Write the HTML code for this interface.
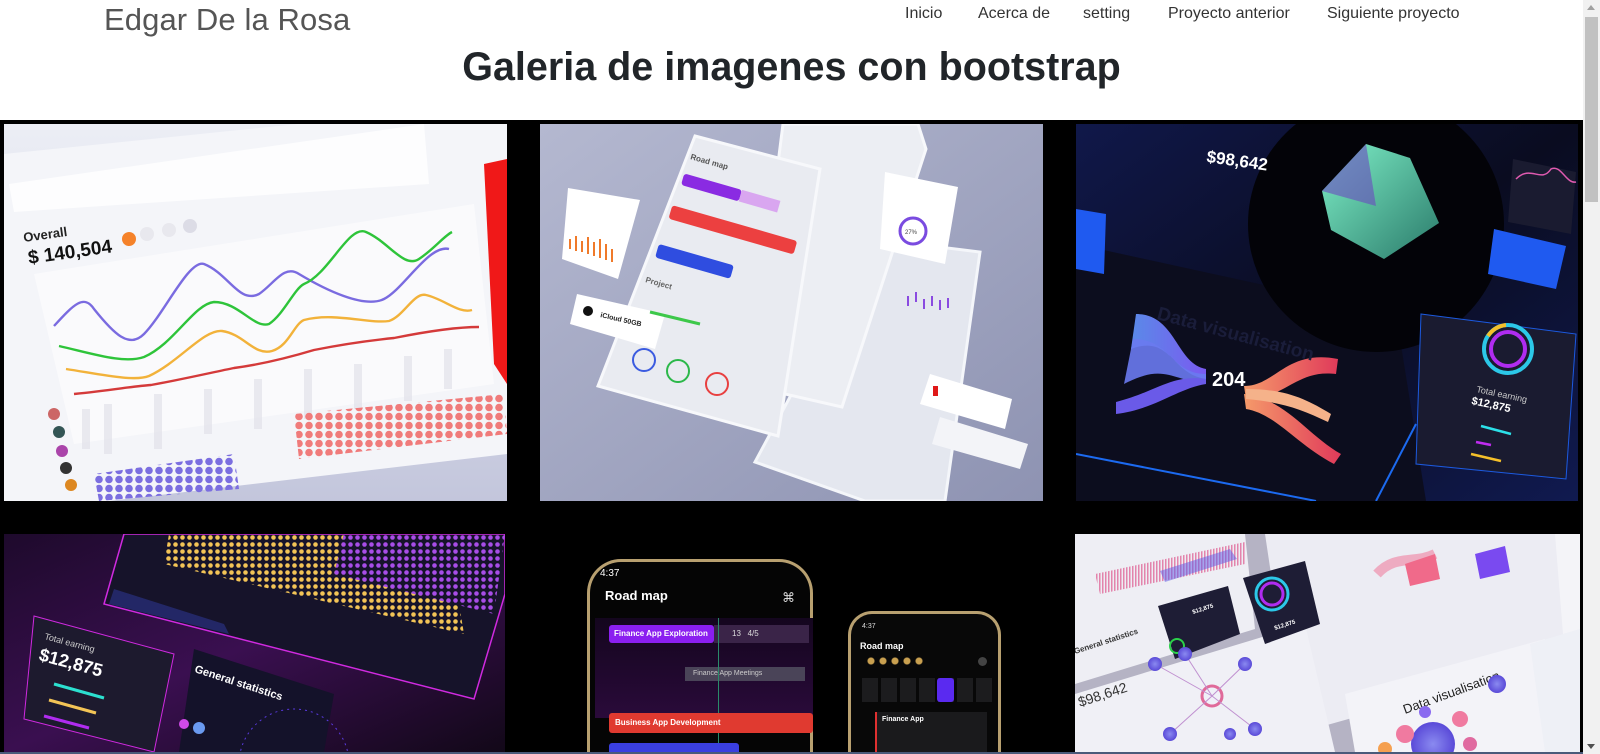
<!DOCTYPE html>
<html><head><meta charset="utf-8"><style>
*{margin:0;padding:0;box-sizing:border-box}
html,body{width:1600px;height:754px;overflow:hidden;background:#fff;font-family:"Liberation Sans",sans-serif;color:#212529}
#wrap{position:relative;width:1600px;height:754px;overflow:hidden}
.abs{position:absolute}
#title{left:104px;top:2px;font-size:31px;font-weight:300;color:#555;letter-spacing:0.1px}
.nav{top:5px;font-size:16px;color:#333}
#h{left:0;width:1583px;top:45px;text-align:center;font-size:39.5px;font-weight:bold;color:#212529}
#black{left:0;top:120px;width:1583px;height:634px;background:#000}
#sb{left:1583px;top:0;width:17px;height:754px;background:#f1f1f1}
#thumb{left:1585px;top:17px;width:13px;height:185px;background:#c1c1c1}
svg{position:absolute;overflow:hidden}
</style></head><body><div id="wrap">
<div class="abs" id="title">Edgar De la Rosa</div>
<div class="abs nav" style="left:905px">Inicio</div>
<div class="abs nav" style="left:978px">Acerca de</div>
<div class="abs nav" style="left:1083px">setting</div>
<div class="abs nav" style="left:1168px">Proyecto anterior</div>
<div class="abs nav" style="left:1327px">Siguiente proyecto</div>
<div class="abs" id="h">Galeria de imagenes con bootstrap</div>
<div class="abs" id="black"></div>

<!-- Panel 1 -->
<svg style="left:4px;top:124px" width="503" height="377" viewBox="0 0 503 377">
<defs><linearGradient id="g1" x1="0" y1="0" x2="0" y2="1"><stop offset="0" stop-color="#eceef5"/><stop offset="1" stop-color="#c3c6dc"/></linearGradient>
<pattern id="hexp" width="10" height="9" patternUnits="userSpaceOnUse"><circle cx="5" cy="4.5" r="3.8" fill="#7b6ee0"/></pattern>
<pattern id="hexr" width="10" height="9" patternUnits="userSpaceOnUse"><circle cx="5" cy="4.5" r="3.8" fill="#f07b7b"/></pattern></defs>
<rect width="503" height="377" fill="url(#g1)"/>
<polygon points="0,30 490,-20 503,-20 503,330 80,380 0,377" fill="#f4f5f9"/>
<polygon points="5,60 420,0 425,60 10,88" fill="#fff" opacity=".8"/>
<polygon points="30,150 470,80 490,260 70,320" fill="#fafafc"/>
<polygon points="480,40 503,35 503,260 490,240" fill="#f01818"/>
<text x="20" y="118" font-size="13" font-weight="bold" fill="#222" transform="rotate(-8 20 118)">Overall</text>
<text x="25" y="140" font-size="19" font-weight="bold" fill="#111" transform="rotate(-8 25 140)">$ 140,504</text>
<circle cx="125" cy="115" r="7" fill="#f5822a"/><circle cx="143" cy="110" r="7" fill="#e8e8ee"/><circle cx="165" cy="106" r="7" fill="#e8e8ee"/><circle cx="186" cy="102" r="7" fill="#dcdce6"/>
<path d="M50,202 C70,180 80,170 90,185 C110,210 125,225 140,210 C160,190 185,135 200,140 C225,150 235,180 255,170 C270,160 280,140 295,150 C320,165 360,185 380,175 C400,165 425,120 445,125" stroke="#7a6be0" stroke-width="2.4" fill="none"/>
<path d="M55,222 C90,230 120,240 140,233 C170,220 190,180 210,178 C235,178 250,205 265,200 C280,190 290,165 300,160 C325,150 345,100 362,108 C385,118 400,145 415,135 C430,125 440,112 448,108" stroke="#2ec43a" stroke-width="2.4" fill="none"/>
<path d="M62,245 C95,250 130,258 145,252 C175,238 200,205 218,207 C240,210 250,232 268,227 C285,222 290,200 300,196 C330,188 365,200 385,197 C400,192 410,168 422,171 C440,175 455,190 468,186" stroke="#f2b23a" stroke-width="2.4" fill="none"/>
<path d="M70,270 C110,266 130,262 147,261 C180,255 210,248 230,244 C260,240 290,232 310,226 C340,220 370,216 390,214 C420,208 450,203 475,203" stroke="#d43a3a" stroke-width="2.4" fill="none"/>
<g fill="#e2e2ea" opacity=".7"><rect x="78" y="285" width="8" height="40"/><rect x="100" y="280" width="8" height="50"/><rect x="150" y="270" width="8" height="55"/><rect x="200" y="265" width="8" height="45"/><rect x="250" y="255" width="8" height="50"/><rect x="300" y="245" width="8" height="50"/><rect x="350" y="240" width="8" height="45"/><rect x="400" y="232" width="8" height="45"/><rect x="440" y="225" width="8" height="40"/></g>
<polygon points="90,350 230,330 235,365 95,377" fill="url(#hexp)"/>
<polygon points="290,290 500,270 503,310 295,335" fill="url(#hexr)"/>
<g><circle cx="50" cy="290" r="6" fill="#c66"/><circle cx="55" cy="308" r="6" fill="#355"/><circle cx="58" cy="327" r="6" fill="#a4a"/><circle cx="62" cy="344" r="6" fill="#333"/><circle cx="67" cy="361" r="6" fill="#d82"/></g>
</svg>

<!-- Panel 2 -->
<svg style="left:540px;top:124px" width="503" height="377" viewBox="0 0 503 377">
<defs><linearGradient id="g2" x1="0" y1="0" x2="1" y2="1"><stop offset="0" stop-color="#b4b8d0"/><stop offset="1" stop-color="#8e93b2"/></linearGradient></defs>
<rect width="503" height="377" fill="url(#g2)"/>
<polygon points="335,115 440,128 405,377 325,377 215,338" fill="#e4e7ef" stroke="#f4f6fa" stroke-width="3"/>
<polygon points="243,0 378,0 386,25 302,283 210,262" fill="#eceef3" stroke="#f7f8fb" stroke-width="3"/>
<polygon points="155,12 280,45 238,312 58,262" fill="#e9ebf1" stroke="#f7f8fb" stroke-width="3"/>
<g transform="rotate(16 180 70)"><rect x="140" y="60" width="60" height="12" rx="3" fill="#8a2be2"/><rect x="200" y="60" width="40" height="12" fill="#d9a6f0"/></g>
<g transform="rotate(16 190 105)"><rect x="128" y="98" width="130" height="14" rx="3" fill="#ec4040"/></g>
<g transform="rotate(16 160 140)"><rect x="115" y="132" width="78" height="14" rx="3" fill="#2f4de0"/></g>
<text x="150" y="35" font-size="8" font-weight="bold" fill="#555" transform="rotate(16 150 35)">Road map</text>
<text x="105" y="158" font-size="8" font-weight="bold" fill="#666" transform="rotate(16 105 158)">Project</text>
<polygon points="28,64 100,76 78,155 22,135" fill="#fff"/>
<g stroke="#f07a2a" stroke-width="2"><line x1="30" y1="125" x2="30" y2="115"/><line x1="36" y1="127" x2="36" y2="112"/><line x1="42" y1="128" x2="42" y2="117"/><line x1="48" y1="130" x2="48" y2="113"/><line x1="54" y1="132" x2="54" y2="118"/><line x1="60" y1="134" x2="60" y2="115"/><line x1="66" y1="136" x2="66" y2="120"/><line x1="72" y1="138" x2="72" y2="125"/></g>
<polygon points="37,170 125,190 115,225 30,200" fill="#fff"/>
<text x="60" y="193" font-size="7" font-weight="bold" fill="#222" transform="rotate(13 60 193)">iCloud 50GB</text>
<circle cx="48" cy="187" r="5" fill="#111"/>
<polygon points="345,48 418,63 405,140 340,125" fill="#fff"/>
<circle cx="373" cy="107" r="13" fill="none" stroke="#7a4be0" stroke-width="3"/>
<text x="365" y="110" font-size="6" fill="#444">27%</text>
<polygon points="390,250 472,275 465,305 380,280" fill="#fff"/>
<rect x="393" y="262" width="5" height="10" fill="#e01818"/>
<polygon points="400,293 488,320 480,345 392,320" fill="#f3f4f8"/>
<circle cx="104" cy="236" r="11" fill="none" stroke="#3b5be0" stroke-width="2"/>
<circle cx="138" cy="247" r="11" fill="none" stroke="#2cb84a" stroke-width="2"/>
<circle cx="177" cy="260" r="11" fill="none" stroke="#e84040" stroke-width="2"/>
<line x1="110" y1="188" x2="160" y2="200" stroke="#3dc84a" stroke-width="3"/>
<g stroke="#8a4be0" stroke-width="2"><line x1="368" y1="172" x2="368" y2="182"/><line x1="376" y1="168" x2="376" y2="178"/><line x1="384" y1="175" x2="384" y2="185"/><line x1="392" y1="172" x2="392" y2="182"/><line x1="400" y1="176" x2="400" y2="186"/><line x1="408" y1="174" x2="408" y2="184"/></g>
</svg>

<!-- Panel 3 -->
<svg style="left:1076px;top:124px" width="502" height="377" viewBox="0 0 502 377">
<defs><linearGradient id="g3" x1="0" y1="0" x2="1" y2="1"><stop offset="0" stop-color="#10184a"/><stop offset=".5" stop-color="#0a0c20"/><stop offset="1" stop-color="#101a50"/></linearGradient>
<linearGradient id="tl" x1="0" y1="0" x2="1" y2="1"><stop offset="0" stop-color="#7ff0c8"/><stop offset="1" stop-color="#2a7a6a"/></linearGradient>
<linearGradient id="bl" x1="0" y1="0" x2="1" y2="0"><stop offset="0" stop-color="#5a8ae8"/><stop offset="1" stop-color="#7a5af0"/></linearGradient>
<linearGradient id="rd" x1="0" y1="0" x2="1" y2="0"><stop offset="0" stop-color="#f59a6a"/><stop offset="1" stop-color="#e03a5a"/></linearGradient></defs>
<rect width="502" height="377" fill="url(#g3)"/>
<polygon points="0,120 320,190 350,377 0,377" fill="#0c0d1e"/>
<line x1="0" y1="330" x2="240" y2="377" stroke="#1c6af0" stroke-width="2"/>
<line x1="340" y1="300" x2="300" y2="377" stroke="#1c6af0" stroke-width="2"/>
<circle cx="300" cy="100" r="128" fill="#030308"/>
<polygon points="290,20 334,34 363,99 308,135 255,106 246,67" fill="url(#tl)"/>
<polygon points="246,67 290,20 300,82" fill="#6a4ac0" opacity=".6"/>
<text x="130" y="38" font-size="17" font-weight="bold" fill="#fff" transform="rotate(8 130 38)">$98,642</text>
<path d="M60,190 C100,190 100,240 130,245 L130,255 C95,250 95,210 55,225 Z" fill="url(#bl)"/>
<path d="M57,215 C95,215 95,250 130,250 L130,258 C95,258 90,238 48,260 Z" fill="#6a7af0" opacity=".9"/>
<path d="M40,278 C80,268 95,250 130,255 L130,260 C100,265 80,285 40,290 Z" fill="#6a5ae8"/>
<text x="136" y="262" font-size="20" font-weight="bold" fill="#fff">204</text>
<path d="M168,262 C200,262 210,225 262,235 L260,250 C220,245 210,275 170,275 Z" fill="url(#rd)"/>
<path d="M168,270 C210,275 230,310 265,330 L258,340 C220,320 200,290 170,285 Z" fill="url(#rd)"/>
<path d="M170,265 C210,265 230,275 255,290 L252,298 C225,285 205,278 170,275 Z" fill="#f5b28a"/>
<text x="80" y="195" font-size="19" font-weight="bold" fill="#1a1d3a" transform="rotate(15 80 195)">Data visualisation</text>
<polygon points="345,190 500,210 490,355 340,340" fill="#1a1b30" stroke="#1c5ae0" stroke-width="1"/>
<circle cx="432" cy="225" r="24" fill="none" stroke="#2cc8e8" stroke-width="4"/>
<circle cx="432" cy="225" r="17" fill="none" stroke="#b02cf0" stroke-width="4"/>
<path d="M412,212 A24,24 0 0 1 430,201" stroke="#f5c02a" stroke-width="4" fill="none"/>
<text x="400" y="268" font-size="9" fill="#ccc" transform="rotate(12 400 268)">Total earning</text>
<text x="395" y="280" font-size="11" font-weight="bold" fill="#fff" transform="rotate(12 395 280)">$12,875</text>
<line x1="405" y1="302" x2="435" y2="310" stroke="#2ce0e8" stroke-width="2.5"/>
<line x1="400" y1="318" x2="415" y2="321" stroke="#c02cf0" stroke-width="2.5"/>
<line x1="395" y1="330" x2="425" y2="337" stroke="#f5c02a" stroke-width="2.5"/>
<polygon points="418,105 490,122 480,165 412,150" fill="#1f5af0"/>
<polygon points="437,35 500,48 495,110 432,98" fill="#1a1b30"/>
<path d="M440,55 C455,40 465,60 475,45 C485,40 490,60 500,58" stroke="#e05ab0" stroke-width="1.5" fill="none"/>
<polygon points="0,85 30,90 28,150 0,145" fill="#1f5af0"/>
</svg>

<!-- Panel 4 -->
<svg style="left:4px;top:534px" width="501" height="218" viewBox="0 0 501 218">
<defs><linearGradient id="g4" x1="0" y1="0" x2="1" y2="1"><stop offset="0" stop-color="#1e0a2c"/><stop offset=".5" stop-color="#3a0f50"/><stop offset="1" stop-color="#120818"/></linearGradient>
<pattern id="dy" width="7" height="7" patternUnits="userSpaceOnUse"><circle cx="3.5" cy="3.5" r="2.3" fill="#f3c456"/></pattern>
<pattern id="dp" width="7" height="7" patternUnits="userSpaceOnUse"><circle cx="3.5" cy="3.5" r="2.3" fill="#a84de8"/></pattern></defs>
<rect width="501" height="218" fill="url(#g4)"/>
<polygon points="120,0 501,0 501,60 470,165 100,70" fill="#16132a" stroke="#d02ae0" stroke-width="1.5"/>
<polygon points="165,0 340,0 330,40 455,70 460,100 160,30" fill="url(#dy)"/>
<polygon points="340,0 501,0 490,80 330,40" fill="url(#dp)"/>
<polygon points="110,55 220,90 225,100 105,70" fill="#2a3080" opacity=".7"/>
<polygon points="30,82 170,120 150,218 20,185" fill="#1d1a2e" stroke="#d02ae0" stroke-width="1"/>
<text x="40" y="105" font-size="9" fill="#ccc" transform="rotate(15 40 105)">Total earning</text>
<text x="34" y="126" font-size="18" font-weight="bold" fill="#fff" transform="rotate(15 34 126)">$12,875</text>
<line x1="50" y1="150" x2="100" y2="164" stroke="#2ce0d0" stroke-width="3"/>
<line x1="45" y1="166" x2="92" y2="179" stroke="#f3c456" stroke-width="3"/>
<line x1="40" y1="182" x2="85" y2="194" stroke="#b02cf0" stroke-width="3"/>
<polygon points="190,115 330,160 320,218 175,218" fill="#14122a"/>
<text x="190" y="138" font-size="11" font-weight="bold" fill="#fff" transform="rotate(18 190 138)">General statistics</text>
<circle cx="290" cy="230" r="55" fill="none" stroke="#5a3ae0" stroke-width="1" stroke-dasharray="2 4"/>
<circle cx="180" cy="190" r="5" fill="#d04ae8"/><circle cx="195" cy="194" r="6" fill="#6a9af0"/>
</svg>

<!-- Panel 5 -->
<div class="abs" style="left:587px;top:559px;width:226px;height:195px;border:3px solid #b8a070;border-bottom:none;border-radius:34px 34px 0 0;background:#050505"></div>
<div class="abs" style="left:600px;top:568px;font-size:10px;color:#fff">4:37</div>
<div class="abs" style="left:605px;top:588px;font-size:13px;color:#fff;font-weight:bold">Road map</div>
<div class="abs" style="left:782px;top:590px;font-size:13px;color:#ddd">⌘</div>
<div class="abs" style="left:595px;top:618px;width:218px;height:100px;background:linear-gradient(#14061e,#2a0a3a)"></div>
<div class="abs" style="left:609px;top:625px;width:105px;height:18px;background:#8b1ff0;border-radius:3px;color:#fff;font-size:8px;line-height:18px;padding-left:5px;font-weight:bold">Finance App Exploration</div>
<div class="abs" style="left:714px;top:625px;width:95px;height:18px;background:#3a2448;color:#ddd;font-size:8px;line-height:18px;padding-left:18px">13 &nbsp; 4/5</div>
<div class="abs" style="left:685px;top:667px;width:120px;height:14px;background:#4a4458;color:#ccc;font-size:7px;line-height:14px;padding-left:8px">Finance App Meetings</div>
<div class="abs" style="left:718px;top:618px;width:1px;height:136px;background:#2a8a6a"></div>
<div class="abs" style="left:609px;top:713px;width:204px;height:20px;background:#e03a30;border-radius:3px;color:#fff;font-size:8px;line-height:20px;padding-left:6px;font-weight:bold">Business App Development</div>
<div class="abs" style="left:609px;top:743px;width:130px;height:11px;background:#3a3fe0;border-radius:3px 3px 0 0"></div>
<div class="abs" style="left:848px;top:611px;width:153px;height:143px;border:3px solid #b8a070;border-bottom:none;border-radius:24px 24px 0 0;background:#080808"></div>
<div class="abs" style="left:862px;top:623px;font-size:7px;color:#ddd">4:37</div>
<div class="abs" style="left:860px;top:641px;font-size:9px;color:#fff;font-weight:bold">Road map</div>
<div class="abs" style="left:865px;top:655px;width:60px;height:12px;background:radial-gradient(circle,#c9a050 3px,transparent 4px) 0 0/12px 12px"></div>
<div class="abs" style="left:978px;top:657px;width:9px;height:9px;border-radius:50%;background:#444"></div>
<div class="abs" style="left:862px;top:678px;width:130px;height:24px;background:repeating-linear-gradient(90deg,#1c1c1e 0 16px,transparent 16px 19px)"></div>
<div class="abs" style="left:937px;top:678px;width:17px;height:24px;background:#5a2af0;border-radius:3px"></div>
<div class="abs" style="left:875px;top:712px;width:112px;height:42px;background:#1a1a1c;border-left:2px solid #e03030"></div>
<div class="abs" style="left:882px;top:716px;font-size:7px;color:#fff;font-weight:bold">Finance App</div>

<!-- Panel 6 -->
<svg style="left:1075px;top:534px" width="505" height="218" viewBox="0 0 505 218">
<defs><pattern id="wv" width="3" height="10" patternUnits="userSpaceOnUse"><rect width="1.5" height="10" fill="#e06a9a"/></pattern>
<radialGradient id="bb"><stop offset="0" stop-color="#8a8af0"/><stop offset="1" stop-color="#5a4ad8"/></radialGradient></defs>
<rect width="505" height="218" fill="#b5b3c4"/>
<polygon points="0,0 170,0 180,95 0,150" fill="#eeeef4"/>
<polygon points="190,0 505,0 505,120 220,200" fill="#ececf3"/>
<polygon points="0,160 230,90 260,218 0,218" fill="#f0f0f6"/>
<polygon points="270,160 470,105 490,218 280,218" fill="#f3f3f8"/>
<polygon points="455,110 505,95 505,218 470,218" fill="#eef0f6"/>
<polygon points="20,40 170,8 170,30 25,60" fill="url(#wv)" opacity=".8"/>
<polygon points="85,37 155,15 162,25 90,48" fill="#5a5ae8" opacity=".5"/>
<polygon points="83,72 153,52 165,100 100,125" fill="#1e1d35"/>
<polygon points="168,44 230,27 245,90 190,110" fill="#1e1d35"/>
<circle cx="197" cy="60" r="16" fill="none" stroke="#2cc8e8" stroke-width="3"/>
<circle cx="197" cy="60" r="11" fill="none" stroke="#b02cf0" stroke-width="3"/>
<text x="118" y="80" font-size="6" font-weight="bold" fill="#fff" transform="rotate(-18 118 80)">$12,875</text>
<text x="200" y="96" font-size="6" font-weight="bold" fill="#fff" transform="rotate(-18 200 96)">$12,875</text>
<circle cx="102" cy="112" r="7" fill="none" stroke="#2cd04a" stroke-width="2"/>
<path d="M302,40 C320,20 340,30 360,20" stroke="#f080a0" stroke-width="10" fill="none" opacity=".6"/>
<polygon points="330,30 360,20 365,45 335,52" fill="#f06a8a"/>
<polygon points="400,20 430,12 435,38 405,45" fill="#7a4af0"/>
<circle cx="137" cy="162" r="10" fill="#f0f0f8" stroke="#e06a9a" stroke-width="3"/>
<g stroke="#c090d0" stroke-width="1"><line x1="137" y1="162" x2="80" y2="130"/><line x1="137" y1="162" x2="110" y2="120"/><line x1="137" y1="162" x2="170" y2="130"/><line x1="137" y1="162" x2="180" y2="195"/><line x1="137" y1="162" x2="95" y2="200"/></g>
<circle cx="80" cy="130" r="7" fill="url(#bb)"/><circle cx="110" cy="120" r="7" fill="url(#bb)"/><circle cx="170" cy="130" r="7" fill="url(#bb)"/><circle cx="180" cy="195" r="7" fill="url(#bb)"/><circle cx="95" cy="200" r="7" fill="url(#bb)"/><circle cx="155" cy="200" r="6" fill="url(#bb)"/>
<text x="5" y="173" font-size="14" fill="#333" transform="rotate(-18 5 173)">$98,642</text>
<text x="0" y="120" font-size="8" font-weight="bold" fill="#333" transform="rotate(-18 0 120)">General statistics</text>
<text x="330" y="180" font-size="13" fill="#222" transform="rotate(-20 330 180)">Data visualisation</text>
<circle cx="358" cy="210" r="22" fill="url(#bb)"/><circle cx="330" cy="200" r="9" fill="#f07aa0"/><circle cx="385" cy="185" r="8" fill="#f07aa0"/><circle cx="310" cy="215" r="7" fill="#f5a050"/><circle cx="395" cy="210" r="7" fill="#e06aa0"/><circle cx="350" cy="178" r="6" fill="#8a6af0"/><circle cx="422" cy="150" r="9" fill="url(#bb)"/>
<polygon points="480,0 505,0 505,95 488,100" fill="#f4f4f8"/>
</svg>
<div class="abs" style="left:0;top:752px;width:1583px;height:2px;background:#4a5a7a"></div>

<div class="abs" id="sb"></div>
<div class="abs" id="thumb"></div>
<div class="abs" style="left:1587px;top:5px;width:0;height:0;border-left:4px solid transparent;border-right:4px solid transparent;border-bottom:5px solid #a0a0a0"></div>
<div class="abs" style="left:1587px;top:744px;width:0;height:0;border-left:4px solid transparent;border-right:4px solid transparent;border-top:5px solid #505050"></div>
</div></body></html>
